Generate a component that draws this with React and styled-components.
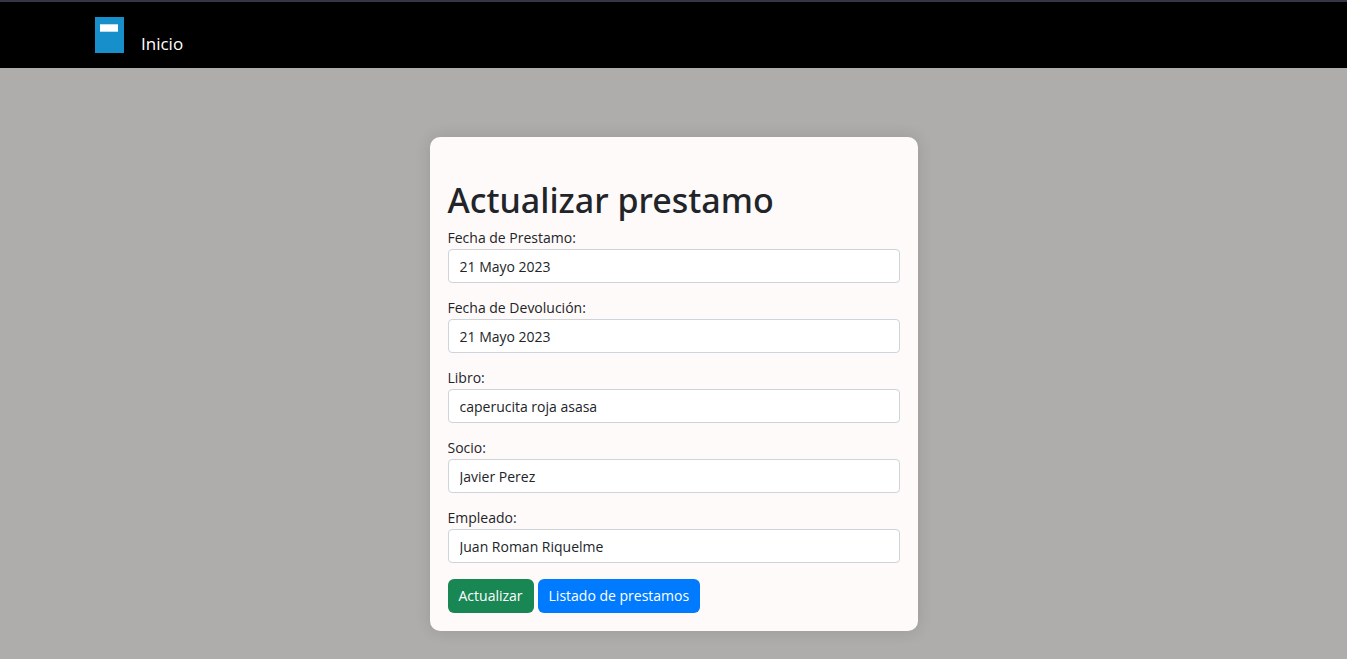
import React from "react";
import styled, { createGlobalStyle } from "styled-components";

const GlobalStyle = createGlobalStyle`
  *, *::before, *::after { box-sizing: border-box; }
  body {
    margin: 0;
    min-height: 100vh;
    background: #aeadab;
    color: #212529;
    font-family: "Segoe UI", "Open Sans", "Noto Sans", sans-serif;
    font-size: 14px;
    line-height: 22px;
  }
`;

const Header = styled.header`
  background: #000;
  border-top: 2px solid #343648;
`;

const Nav = styled.nav`
  display: flex;
  align-items: flex-end;
  gap: 17px;
  max-width: 1187px;
  margin: 0 auto;
  padding: 15px;
`;

const Brand = styled.a`
  display: block;
  line-height: 0;
`;

const NavLink = styled.a`
  color: #fff;
  font-size: 17px;
  line-height: 18px;
  text-decoration: none;
`;

const Main = styled.main`
  padding: 69px 16px 28px;
`;

const Card = styled.form`
  max-width: 488px;
  margin: 0 auto;
  padding: 42px 18px 18px;
  background: #fffafa;
  border-radius: 10px;
  box-shadow: 0 0 16px rgba(0, 0, 0, 0.12);
`;

const Title = styled.h1`
  margin: 0 0 5px;
  font-family: "Segoe UI", "Noto Sans", "Open Sans", sans-serif;
  font-size: 34px;
  font-weight: 500;
  line-height: 43px;
`;

const FieldGroup = styled.div`
  display: flex;
  flex-direction: column;
  margin-bottom: 14px;
`;

const Input = styled.input`
  width: 100%;
  height: 34px;
  padding: 0 11px;
  background: #fff;
  border: 1px solid #ced4da;
  border-radius: 4px;
  color: #212529;
  font: inherit;
`;

const Actions = styled.div`
  display: flex;
  gap: 4px;
  padding-top: 2px;
`;

const Button = styled.button`
  height: 34px;
  padding: 0 11px;
  border: 0;
  border-radius: 6px;
  background: ${({ $color }) => $color};
  color: #fff;
  font: inherit;
  cursor: pointer;
`;

const fields = [
  { id: "fecha-prestamo", label: "Fecha de Prestamo:", value: "21 Mayo 2023" },
  { id: "fecha-devolucion", label: "Fecha de Devolución:", value: "21 Mayo 2023" },
  { id: "libro", label: "Libro:", value: "caperucita roja asasa" },
  { id: "socio", label: "Socio:", value: "Javier Perez" },
  { id: "empleado", label: "Empleado:", value: "Juan Roman Riquelme" },
];

export default function App() {
  return (
    <>
      <GlobalStyle />
      <Header>
        <Nav>
          <Brand href="#" aria-label="Biblioteca">
            <svg width="29" height="36" viewBox="0 0 29 36" aria-hidden="true">
              <rect width="29" height="36" fill="#168fca" />
              <rect x="5" y="7.3" width="18" height="7.4" fill="#fff" />
            </svg>
          </Brand>
          <NavLink href="#">Inicio</NavLink>
        </Nav>
      </Header>
      <Main>
        <Card onSubmit={(e) => e.preventDefault()}>
          <Title>Actualizar prestamo</Title>
          {fields.map(({ id, label, value }) => (
            <FieldGroup key={id}>
              <label htmlFor={id}>{label}</label>
              <Input id={id} type="text" defaultValue={value} />
            </FieldGroup>
          ))}
          <Actions>
            <Button type="submit" $color="#198754">Actualizar</Button>
            <Button type="button" $color="#007bff">Listado de prestamos</Button>
          </Actions>
        </Card>
      </Main>
    </>
  );
}
